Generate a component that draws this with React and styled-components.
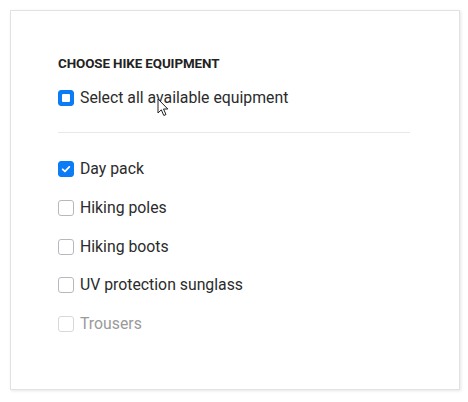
import React, { useState } from "react";
import styled, { createGlobalStyle } from "styled-components";

const GlobalStyle = createGlobalStyle`
  body {
    margin: 0;
    background: #ffffff;
    font-family: Roboto, "Liberation Sans", sans-serif;
  }
`;

const items = [
  { name: "Day pack", checked: true },
  { name: "Hiking poles", checked: false },
  { name: "Hiking boots", checked: false },
  { name: "UV protection sunglass", checked: false },
  { name: "Trousers", checked: false, disabled: true },
];

const App = () => {
  const [list, setList] = useState(items);
  const toggle = (i) =>
    setList(list.map((it, n) => (n === i && !it.disabled ? { ...it, checked: !it.checked } : it)));

  return (
    <>
      <GlobalStyle />
      <Card>
        <Heading>Choose hike equipment</Heading>
        <SelectAllRow>
          <Box state="mixed" />
          <Label>Select all available equipment</Label>
          <Cursor viewBox="0 0 12 19" width="12" height="19">
            <path
              d="M1 1 L1 15 L4.3 11.8 L6.8 17.5 L9 16.5 L6.5 11 L10.8 11 Z"
              fill="#fff"
              stroke="#222"
              strokeWidth="1"
              strokeLinejoin="round"
            />
          </Cursor>
        </SelectAllRow>
        <Divider />
        <List>
          {list.map((it, i) => (
            <Row key={it.name} onClick={() => toggle(i)}>
              <Box state={it.checked ? "on" : "off"} disabled={it.disabled}>
                {it.checked && (
                  <svg viewBox="0 0 16 16" width="16" height="16">
                    <path
                      d="M4.2 8.3 L6.8 10.8 L11.8 5.6"
                      fill="none"
                      stroke="#fff"
                      strokeWidth="2"
                      strokeLinecap="round"
                      strokeLinejoin="round"
                    />
                  </svg>
                )}
              </Box>
              <Label disabled={it.disabled}>{it.name}</Label>
            </Row>
          ))}
        </List>
      </Card>
    </>
  );
};

const Card = styled.div`
  box-sizing: border-box;
  margin: 10px;
  width: 450px;
  height: 380px;
  border: 1px solid #e2e2e2;
  box-shadow: 1px 1px 3px rgba(0, 0, 0, 0.1);
  background: #fff;
  padding: 45px 49px 0 47px;
`;

const Heading = styled.div`
  font-size: 13.4px;
  font-weight: 700;
  text-transform: uppercase;
  letter-spacing: -0.1px;
  color: #222;
  line-height: 16px;
`;

const SelectAllRow = styled.div`
  position: relative;
  display: flex;
  align-items: center;
  gap: 6px;
  height: 22px;
  margin-top: 15px;
`;

const Divider = styled.div`
  height: 1px;
  background: #e8e8e8;
  margin-top: 23px;
`;

const List = styled.div`
  display: flex;
  flex-direction: column;
  gap: 16.75px;
  margin-top: 25px;
`;

const Row = styled.label`
  display: flex;
  align-items: center;
  gap: 6px;
  height: 22px;
  cursor: pointer;
`;

const Box = styled.span`
  box-sizing: border-box;
  width: 16px;
  height: 16px;
  flex: none;
  border-radius: 3px;
  display: flex;
  align-items: center;
  justify-content: center;
  background: ${(p) => (p.state === "off" ? "#fff" : "#0b7cf5")};
  border: 1px solid
    ${(p) => (p.state === "off" ? (p.disabled ? "#d8d8d8" : "#b5b9bf") : "#0b7cf5")};
  &::after {
    content: "";
    display: ${(p) => (p.state === "mixed" ? "block" : "none")};
    width: 8px;
    height: 8px;
    background: #fff;
    border-radius: 1px;
  }
`;

const Label = styled.span`
  font-size: 15.8px;
  color: ${(p) => (p.disabled ? "#9a9a9a" : "#2b2b2b")};
  line-height: 22px;
`;

const Cursor = styled.svg`
  position: absolute;
  left: 99px;
  top: 11px;
`;

export default App;
